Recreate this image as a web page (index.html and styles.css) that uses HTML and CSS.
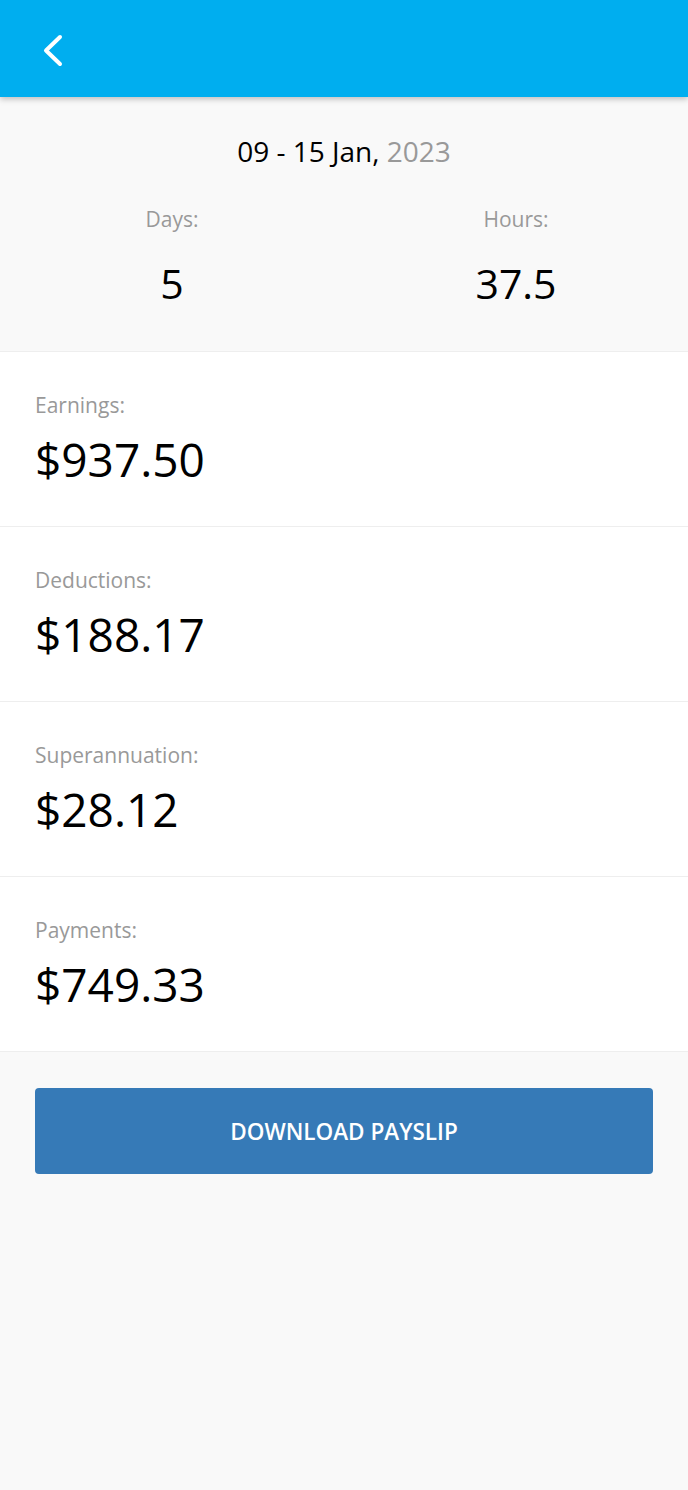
FILE: index.html
```html
<!DOCTYPE html>
<html lang="en">
<head>
    <meta charset="UTF-8">
    <meta name="viewport" content="width=device-width, initial-scale=1.0">
    <title>Payslip</title>
    <link rel="stylesheet" href="styles.css">
</head>
<body>
    <header class="topbar">
        <a class="back" href="#">
            <svg width="28" height="36" viewBox="0 0 28 36">
                <path d="M20 5 L6 18.5 L20 32" fill="none" stroke="#fff" stroke-width="4" stroke-linecap="round" stroke-linejoin="round"/>
            </svg>
        </a>
    </header>
    <section class="summary">
        <div class="period">09 - 15 Jan, <span class="year">2023</span></div>
        <div class="totals">
            <div class="total">
                <div class="label">Days:</div>
                <div class="count">5</div>
            </div>
            <div class="total">
                <div class="label">Hours:</div>
                <div class="count">37.5</div>
            </div>
        </div>
    </section>
    <section class="amount">
        <div class="label">Earnings:</div>
        <div class="value">$937.50</div>
    </section>
    <section class="amount">
        <div class="label">Deductions:</div>
        <div class="value">$188.17</div>
    </section>
    <section class="amount">
        <div class="label">Superannuation:</div>
        <div class="value">$28.12</div>
    </section>
    <section class="amount">
        <div class="label">Payments:</div>
        <div class="value">$749.33</div>
    </section>
    <div class="actions">
        <button class="download">DOWNLOAD PAYSLIP</button>
    </div>
</body>
</html>
```
FILE: styles.css
```css
body {
    font-family: "Open Sans", "Liberation Sans", sans-serif;
    margin: 0;
    background-color: #f9f9f9;
    color: #000;
    min-height: 1490px;
}
.topbar {
    height: 97px;
    background-color: #00aeef;
    display: flex;
    align-items: center;
    padding-left: 40px;
    box-shadow: 0 2px 6px rgba(0, 0, 0, 0.25);
    position: relative;
}
.back {
    display: flex;
    margin-top: 2px;
}
.summary {
    padding: 35px 0 41px;
    text-align: center;
    border-bottom: 1px solid #eeeeee;
}
.period {
    font-size: 28px;
    line-height: 38px;
}
.year {
    color: #999;
}
.totals {
    display: grid;
    grid-template-columns: 1fr 1fr;
    margin-top: 36px;
}
.label {
    font-size: 21px;
    line-height: 27px;
    color: #999;
}
.count {
    font-size: 41px;
    line-height: 54px;
    margin-top: 23px;
}
.amount {
    background-color: #fff;
    padding: 40px 35px 37px;
    border-bottom: 1px solid #eeeeee;
}
.value {
    font-size: 46px;
    line-height: 60px;
    margin-top: 10px;
}
.actions {
    padding: 36px 35px;
}
.download {
    width: 100%;
    height: 86px;
    border: none;
    border-radius: 4px;
    background-color: #367ab7;
    color: #fff;
    font-family: inherit;
    font-size: 22.5px;
    font-weight: 600;
}
```
